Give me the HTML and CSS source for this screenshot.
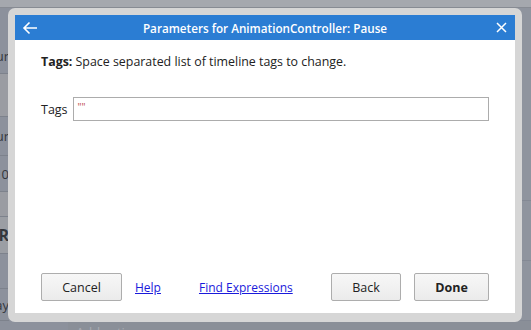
FILE: index.html
```html
<!DOCTYPE html>
<html lang="en">
<head>
    <meta charset="UTF-8">
    <meta name="viewport" content="width=device-width, initial-scale=1.0">
    <title>Parameters for AnimationController: Pause</title>
    <link rel="stylesheet" href="styles.css">
</head>
<body>
    <div class="page">
        <div class="page-top"></div>
        <div class="page-body">
            <aside class="side">
                <div class="side-row row-a">Tour</div>
                <div class="side-row row-b side-light"></div>
                <div class="side-row row-c">Tour</div>
                <div class="side-row row-d">10</div>
                <div class="side-row row-e side-light"></div>
                <div class="side-row row-f side-head">OR</div>
                <div class="side-row row-g"></div>
                <div class="side-row row-h">Play</div>
            </aside>
            <main class="events">
                <div class="event-row"></div>
                <div class="event-row"></div>
                <div class="event-row"></div>
                <div class="event-foot">Add action</div>
            </main>
        </div>
    </div>

    <div class="overlay">
        <section class="dialog">
            <div class="dialog-inner">
                <header class="dialog-title">
                    <button class="title-btn back-btn" aria-label="Back">
                        <svg width="16" height="14" viewBox="0 0 16 14">
                            <path d="M15 7H2M7.5 1.5L2 7l5.5 5.5" fill="none" stroke="#fff" stroke-width="1.6"/>
                        </svg>
                    </button>
                    <h1>Parameters for AnimationController: Pause</h1>
                    <button class="title-btn close-btn" aria-label="Close">
                        <svg width="11" height="11" viewBox="0 0 11 11">
                            <path d="M1 1l9 9M10 1l-9 9" fill="none" stroke="#fff" stroke-width="1.5"/>
                        </svg>
                    </button>
                </header>

                <div class="dialog-body">
                    <p class="param-desc"><b>Tags:</b> Space separated list of timeline tags to change.</p>
                    <div class="param-row">
                        <label for="tags">Tags</label>
                        <div class="param-input" id="tags">""</div>
                    </div>
                </div>

                <footer class="dialog-foot">
                    <button class="btn btn-cancel">Cancel</button>
                    <a href="#" class="link link-help">Help</a>
                    <a href="#" class="link">Find Expressions</a>
                    <span class="spacer"></span>
                    <button class="btn btn-back">Back</button>
                    <button class="btn btn-done">Done</button>
                </footer>
            </div>
        </section>
    </div>
</body>
</html>
```

FILE: styles.css
```css
html{
    box-sizing: border-box;
    font-family: 'Open Sans', 'Noto Sans', sans-serif;
    font-size: 12px;
}

*,
*:after,
*:before{
    box-sizing: inherit;
}

body{
    margin: 0;
    width: 531px;
    height: 330px;
    overflow: hidden;
    position: relative;
    background-color: #8f949e;
}

/* app underneath the dialog */
.page{
    height: 100%;
    display: flex;
    flex-direction: column;
}

.page-top{
    height: 8px;
    background-color: #a5a8ae;
    border-bottom: 1px solid #878b93;
}

.page-body{
    flex: 1;
    display: flex;
}

.side{
    width: 68px;
    display: flex;
    flex-direction: column;
    padding-top: 31px;
    background-color: #8c919c;
    overflow: hidden;
}

.side-row{
    display: flex;
    align-items: center;
    justify-content: flex-end;
    width: 9px;
    color: #34373c;
    font-size: 13px;
    white-space: nowrap;
    border-bottom: 1px solid #7d828c;
}

.row-a{ height: 35px; }
.row-b{ height: 43px; }
.row-c{ height: 39px; }
.row-d{ height: 36px; }
.row-e{ height: 25px; }
.row-f{ height: 37px; }
.row-g{ height: 35px; }
.row-h{ height: 32px; }

.side-light{
    background-color: #9a9ca2;
}

.side-head{
    font-weight: bold;
    font-size: 16px;
    background-color: #9b9ea4;
}

.events{
    flex: 1;
    display: flex;
    flex-direction: column;
    justify-content: flex-end;
}

.event-row{
    height: 60px;
    border-bottom: 1px solid #848994;
}

.event-foot{
    height: 9px;
    padding: 0 0 0 8px;
    color: #a8abb1;
    font-size: 13px;
    line-height: 22px;
    overflow: hidden;
    background-color: #8a8f98;
}

/* dialog */
.overlay{
    position: absolute;
    inset: 0;
    padding: 8px 9px 8px 8px;
}

.dialog{
    height: 314px;
    padding: 7px 7px 9px 7px;
    border-radius: 7px;
    background-color: #d6d6d6;
}

.dialog-inner{
    height: 100%;
    display: flex;
    flex-direction: column;
    background-color: #fff;
}

.dialog-title{
    height: 25px;
    display: flex;
    align-items: center;
    background-color: #2b7dd3;
    color: #fff;
}

.dialog-title h1{
    flex: 1;
    margin: 0;
    text-align: center;
    font-size: 11.7px;
    font-weight: 600;
}

.title-btn{
    width: 36px;
    height: 25px;
    padding: 0;
    border: none;
    background: none;
    display: flex;
    align-items: center;
    justify-content: center;
}

.back-btn{
    padding-right: 6px;
}

.close-btn{
    padding-left: 8px;
}

.dialog-body{
    flex: 1;
    padding: 13px 26px 0 26px;
    color: #222;
}

.param-desc{
    margin: 0;
    line-height: 17px;
    font-size: 12.4px;
}

.param-row{
    margin-top: 27px;
    display: flex;
    align-items: center;
    gap: 5px;
}

.param-row label{
    font-size: 12.5px;
}

.param-input{
    flex: 1;
    height: 24px;
    padding: 2px 4px;
    border: 1px solid #acacac;
    color: #c0504d;
    font-size: 10px;
    line-height: 14px;
}

.dialog-foot{
    display: flex;
    align-items: center;
    padding: 0 26px 12px 26px;
}

.spacer{
    flex: 1;
}

.btn{
    height: 28px;
    border: 1px solid #adadad;
    border-radius: 2px;
    background: linear-gradient(#f7f7f7, #ebebeb);
    font-family: inherit;
    font-size: 12.5px;
    color: #222;
}

.btn-cancel{
    width: 81px;
}

.btn-back{
    width: 70px;
    margin-right: 13px;
}

.btn-done{
    width: 75px;
    font-weight: bold;
}

.link{
    color: #1a1adb;
    font-size: 12px;
}

.link-help{
    margin: 0 38px 0 13px;
}
```
